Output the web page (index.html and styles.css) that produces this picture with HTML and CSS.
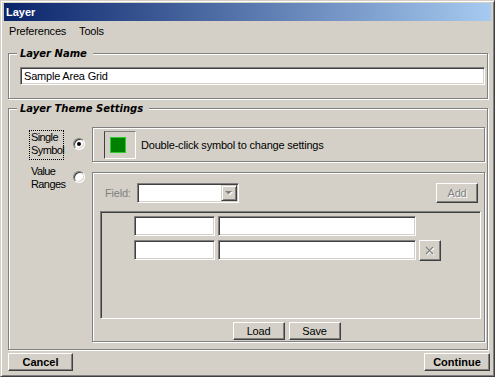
FILE: index.html
```html
<!DOCTYPE html>
<html lang="en">
<head>
<meta charset="utf-8">
<title>Layer</title>
<link rel="stylesheet" href="styles.css">
</head>
<body>
<div class="window">
  <div class="titlebar">Layer</div>
  <div class="menubar"><span>Preferences</span><span>Tools</span></div>

  <fieldset class="group name-group">
    <legend>Layer Name</legend>
    <div class="name-body">
      <div class="textbox">Sample Area Grid</div>
    </div>
  </fieldset>

  <fieldset class="group theme-group">
    <legend>Layer Theme Settings</legend>
    <div class="theme-body">
      <div class="options">
        <div class="option option-single">
          <span class="option-label focus">Single<br>Symbol</span>
          <span class="radio checked"><span class="dot"></span></span>
        </div>
        <div class="option option-ranges">
          <span class="option-label">Value<br>Ranges</span>
          <span class="radio"></span>
        </div>
      </div>
      <div class="panels">
        <div class="etched symbol-panel">
          <div class="symbol-btn"><div class="swatch"></div></div>
          <span class="symbol-text">Double-click symbol to change settings</span>
        </div>
        <div class="etched ranges-panel">
          <div class="field-row">
            <span class="field-label">Field:</span>
            <div class="combo">
              <span class="combo-btn">
                <svg width="8" height="5" viewBox="0 0 8 5"><path d="M1 1h7L4.5 4.5z" fill="#fff"/><path d="M0 0h7L3.5 3.5z" fill="#808080"/></svg>
              </span>
            </div>
            <button class="btn add-btn">Add</button>
          </div>
          <div class="list">
            <div class="list-row">
              <div class="cell c1"></div>
              <div class="cell c2"></div>
            </div>
            <div class="list-row">
              <div class="cell c1"></div>
              <div class="cell c2"></div>
              <button class="btn x-btn">
                <svg width="10" height="10" viewBox="0 0 10 10"><path d="M2 2L9 9M9 2L2 9" stroke="#fff" stroke-width="1.1"/><path d="M1 1L8 8M8 1L1 8" stroke="#808080" stroke-width="1.1"/></svg>
              </button>
            </div>
          </div>
          <div class="load-save">
            <button class="btn ls-btn">Load</button>
            <button class="btn ls-btn">Save</button>
          </div>
        </div>
      </div>
    </div>
  </fieldset>

  <div class="footer">
    <button class="btn footer-btn cancel">Cancel</button>
    <button class="btn footer-btn continue">Continue</button>
  </div>
</div>
</body>
</html>
```
FILE: styles.css
```css
* { box-sizing: border-box; }
html, body { margin: 0; padding: 0; }
body {
  width: 495px;
  height: 377px;
  overflow: hidden;
  background: #d4d0c8;
  font-family: "Liberation Sans", Arial, sans-serif;
  font-size: 11px;
  letter-spacing: -0.2px;
  color: #000;
}

.window {
  width: 495px;
  height: 377px;
  display: flex;
  flex-direction: column;
  padding: 2px 3px 2px 3px;
  border: 1px solid;
  border-color: #d4d0c8 #404040 #404040 #d4d0c8;
  box-shadow: inset 1px 1px #fff, inset -1px -1px #808080;
  background: #d4d0c8;
}

.titlebar {
  flex: none;
  height: 18px;
  line-height: 18px;
  padding-left: 2px;
  background: linear-gradient(to right, #0a246a, #a6caf0);
  color: #fff;
  font-weight: bold;
  letter-spacing: 0;
}

.menubar {
  flex: none;
  height: 19px;
  display: flex;
  align-items: center;
  gap: 13px;
  padding-left: 5px;
}

.group {
  flex: none;
  margin: 0 3px 0 4px;
  padding: 0;
  min-width: 0;
  border: 1px solid #808080;
  box-shadow: inset 1px 1px #fff, 1px 1px #fff;
}
.group legend {
  margin-left: 8px;
  padding: 0 6px 0 3px;
  background: #d4d0c8;
  font-family: "DejaVu Sans", sans-serif;
  font-weight: bold;
  font-style: italic;
  font-size: 10px;
  line-height: 13px;
  letter-spacing: 0;
}

.name-group { margin-top: 7px; }
.name-body { padding: 7px 2px 13px 11px; }

.textbox {
  height: 18px;
  line-height: 16px;
  padding: 0 3px;
  background: #fff;
  border: 1px solid;
  border-color: #808080 #fff #fff #808080;
  box-shadow: inset 1px 1px #404040, inset -1px -1px #d4d0c8;
  white-space: nowrap;
}

.theme-group { margin-top: 3px; }
.theme-body {
  display: flex;
  padding: 12px 2px 7px 20px;
}

.options {
  flex: none;
  width: 63px;
  padding-top: 3px;
  display: flex;
  flex-direction: column;
  gap: 4px;
}
.option { display: flex; align-items: flex-start; }
.option-label {
  flex: none;
  width: 35px;
  padding: 0 0 2px 1px;
  border: 1px dotted transparent;
  line-height: 13px;
  letter-spacing: -0.6px;
  white-space: nowrap;
}
.option-label.focus { border-color: #000; }

.radio {
  flex: none;
  width: 12px;
  height: 12px;
  margin-left: 9px;
  border-radius: 50%;
  background: #fff;
  border: 1px solid;
  border-color: #808080 #fff #fff #808080;
  box-shadow: inset 1px 1px #404040, inset -1px -1px #d4d0c8;
  display: flex;
  align-items: center;
  justify-content: center;
}
.option-single .radio { margin-top: 8px; }
.option-ranges .radio { margin-top: 7px; }
.radio .dot {
  width: 4px;
  height: 4px;
  border-radius: 50%;
  background: #000;
}

.panels {
  flex: 1;
  min-width: 0;
  display: flex;
  flex-direction: column;
  gap: 10px;
}

.etched {
  border: 1px solid #808080;
  box-shadow: inset 1px 1px #fff, 1px 1px #fff;
}

.symbol-panel {
  height: 35px;
  display: flex;
  align-items: flex-start;
  padding: 3px 0 0 11px;
}
.symbol-btn {
  width: 32px;
  height: 28px;
  display: flex;
  align-items: center;
  padding-left: 5px;
  border: 1px solid;
  border-color: #808080 #fff #fff #404040;
}
.swatch {
  width: 16px;
  height: 16px;
  background: #008000;
  border: 1px solid #2ecc2e;
}
.symbol-text {
  align-self: center;
  margin-left: 5px;
  margin-top: -3px;
}

.ranges-panel {
  height: 170px;
  display: flex;
  flex-direction: column;
  padding: 10px 3px 1px 7px;
}

.field-row {
  height: 20px;
  display: flex;
  align-items: center;
  padding: 0 3px 0 5px;
}
.field-label {
  width: 32px;
  color: #808080;
}
.combo {
  width: 102px;
  height: 20px;
  padding: 1px;
  display: flex;
  justify-content: flex-end;
  background: #fff;
  border: 1px solid;
  border-color: #808080 #fff #fff #808080;
  box-shadow: inset 1px 1px #404040, inset -1px -1px #d4d0c8;
}
.combo-btn {
  width: 16px;
  height: 16px;
  display: flex;
  align-items: center;
  justify-content: center;
  background: #d4d0c8;
  border: 1px solid;
  border-color: #d4d0c8 #404040 #404040 #d4d0c8;
  box-shadow: inset 1px 1px #fff, inset -1px -1px #808080;
}

.btn {
  margin: 0;
  padding: 0;
  font: inherit;
  letter-spacing: inherit;
  color: #000;
  background: #d4d0c8;
  border: 1px solid;
  border-color: #fff #404040 #404040 #fff;
  box-shadow: inset -1px -1px #808080;
  display: flex;
  align-items: center;
  justify-content: center;
}
.add-btn {
  margin-left: auto;
  width: 42px;
  height: 20px;
  color: #808080;
  text-shadow: 1px 1px #fff;
}

.list {
  margin-top: 8px;
  height: 108px;
  padding: 4px 0 0 33px;
  display: flex;
  flex-direction: column;
  gap: 4px;
  border: 1px solid;
  border-color: #808080 #fff #fff #808080;
  box-shadow: inset 1px 1px #404040, inset -1px -1px #d4d0c8;
}
.list-row {
  display: flex;
  gap: 3px;
  height: 20px;
}
.cell {
  height: 20px;
  background: #fff;
  border: 1px solid;
  border-color: #808080 #fff #fff #808080;
  box-shadow: inset 1px 1px #404040, inset -1px -1px #d4d0c8;
}
.c1 { width: 81px; }
.c2 { width: 198px; }
.x-btn {
  width: 22px;
  height: 21px;
}

.load-save {
  margin-top: 3px;
  display: flex;
  justify-content: center;
  gap: 4px;
  padding-right: 8px;
}
.ls-btn {
  width: 52px;
  height: 18px;
}

.footer {
  flex: none;
  margin-top: 3px;
  display: flex;
  justify-content: space-between;
  padding: 0 1px 0 4px;
}
.footer-btn {
  height: 18px;
  font-weight: bold;
  letter-spacing: 0;
}
.cancel { width: 65px; }
.continue { width: 66px; }
```
